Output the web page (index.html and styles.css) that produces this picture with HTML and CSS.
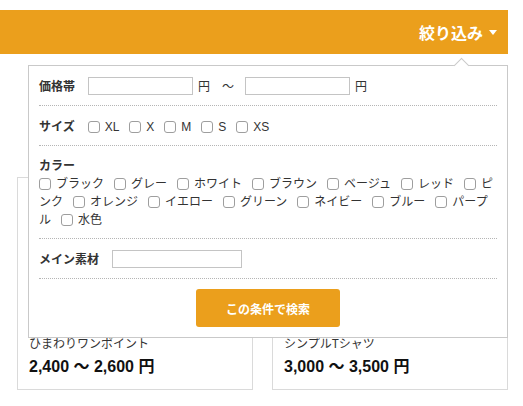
FILE: index.html
```html
<!DOCTYPE html>
<html lang="ja">
<head>
<meta charset="utf-8">
<title>絞り込み</title>
<link rel="stylesheet" href="styles.css">
</head>
<body>
<div class="page">
  <header class="bar">
    <button class="toggle" type="button">絞り込み<span class="tri"></span></button>
    <form class="panel">
      <span class="caret"></span>
      <div class="row price-row">
        <span class="lbl">価格帯</span><input class="txt price" type="text"><span class="unit">円</span><span class="wave">〜</span><input class="txt price" type="text"><span class="unit">円</span>
      </div>
      <div class="row size-row">
        <span class="lbl">サイズ</span><label class="chk"><input type="checkbox">XL</label><label class="chk"><input type="checkbox">X</label><label class="chk"><input type="checkbox">M</label><label class="chk"><input type="checkbox">S</label><label class="chk"><input type="checkbox">XS</label>
      </div>
      <div class="row color-row">
        <div class="lbl">カラー</div>
        <div class="opts"><label class="chk"><input type="checkbox">ブラック</label><label class="chk"><input type="checkbox">グレー</label><label class="chk"><input type="checkbox">ホワイト</label><label class="chk"><input type="checkbox">ブラウン</label><label class="chk"><input type="checkbox">ベージュ</label><label class="chk"><input type="checkbox">レッド</label><label class="chk"><input type="checkbox">ピンク</label><label class="chk"><input type="checkbox">オレンジ</label><label class="chk"><input type="checkbox">イエロー</label><label class="chk"><input type="checkbox">グリーン</label><label class="chk"><input type="checkbox">ネイビー</label><label class="chk"><input type="checkbox">ブルー</label><label class="chk"><input type="checkbox">パープル</label><label class="chk"><input type="checkbox">水色</label></div>
      </div>
      <div class="row mat-row">
        <span class="lbl">メイン素材</span><input class="txt mat" type="text">
      </div>
      <div class="actions">
        <button class="search" type="button">この条件で検索</button>
      </div>
    </form>
  </header>
  <main class="cards">
    <article class="card">
      <div class="thumb"></div>
      <p class="name">ひまわりワンポイント</p>
      <p class="cost">2,400 ～ 2,600 円</p>
    </article>
    <article class="card">
      <div class="thumb"></div>
      <p class="name">シンプルTシャツ</p>
      <p class="cost">3,000 ～ 3,500 円</p>
    </article>
  </main>
</div>
</body>
</html>
```

FILE: styles.css
```css
* {
  box-sizing: border-box;
}

body {
  margin: 0;
  background: #fff;
  font-family: "Liberation Sans", "Noto Sans CJK JP", sans-serif;
  font-size: 12px;
  color: #333;
}

.page {
  width: 508px;
  padding-top: 10px;
}

.bar {
  position: relative;
  height: 44px;
  background: #eb9f1c;
  display: flex;
  justify-content: flex-end;
  align-items: center;
  padding-right: 11px;
}

.toggle {
  display: flex;
  align-items: center;
  gap: 6px;
  border: 0;
  padding: 0;
  background: none;
  color: #fff;
  font-family: "Noto Sans CJK JP", sans-serif;
  font-weight: 700;
  font-size: 16px;
  line-height: 20px;
}

.tri {
  width: 0;
  height: 0;
  border-left: 4.5px solid transparent;
  border-right: 4.5px solid transparent;
  border-top: 5px solid #fff;
  margin-top: 1px;
}

.panel {
  position: absolute;
  top: 55px;
  left: 28px;
  width: 480px;
  background: #fff;
  border: 1px solid #c9c9c9;
  padding: 0 10px 10px;
  z-index: 5;
}

.caret {
  position: absolute;
  top: -6px;
  left: 427px;
  width: 11px;
  height: 11px;
  background: #fff;
  border-top: 1px solid #c9c9c9;
  border-left: 1px solid #c9c9c9;
  transform: rotate(45deg);
}

.row {
  border-bottom: 1px dotted #b5b5b5;
  line-height: 18px;
}

.lbl {
  font-family: "Noto Sans CJK JP", sans-serif;
  font-weight: 700;
  color: #333;
  margin-right: 13px;
}

.price-row {
  display: flex;
  align-items: center;
  padding: 11px 0 10px;
}

.txt {
  height: 18px;
  border: 1px solid #c4c4c4;
  border-radius: 0;
  padding: 0 4px;
  font: inherit;
  background: #fff;
}

.price {
  width: 105px;
}

.unit {
  margin-left: 5px;
  font-family: "Noto Sans CJK JP", sans-serif;
}

.wave {
  margin: 0 11px 0 12px;
  font-family: "Noto Sans CJK JP", sans-serif;
}

.size-row {
  padding: 11px 0 9px;
}

.chk {
  margin-right: 10px;
  white-space: normal;
}

.chk input {
  appearance: none;
  -webkit-appearance: none;
  width: 12px;
  height: 12px;
  margin: 0 5px 0 0;
  border: 1px solid #9e9e9e;
  border-radius: 3px;
  background: #fff;
  vertical-align: -2px;
}

.color-row {
  padding: 10px 0;
}

.color-row .lbl {
  margin-right: 0;
}

.opts {
  font-family: "Noto Sans CJK JP", sans-serif;
}

.mat-row {
  display: flex;
  align-items: center;
  padding: 11px 0 10px;
}

.mat {
  width: 130px;
}

.actions {
  display: flex;
  justify-content: center;
  padding-top: 10px;
}

.search {
  width: 144px;
  height: 38px;
  border: 0;
  border-radius: 3px;
  background: #eb9f1c;
  color: #fff;
  font-family: "Noto Sans CJK JP", sans-serif;
  font-weight: 700;
  font-size: 12px;
}

.cards {
  display: flex;
  gap: 19px;
  padding-left: 17px;
  margin-top: 123px;
}

.card {
  width: 236px;
  height: 213px;
  border: 1px solid #dadada;
  padding: 11px 11px 10px;
}

.thumb {
  height: 145px;
}

.name {
  margin: 0;
  font-family: "Noto Sans CJK JP", sans-serif;
  font-size: 12px;
  line-height: 18px;
  color: #333;
}

.cost {
  margin: 4px 0 0;
  font-weight: 700;
  font-size: 16px;
  line-height: 22px;
  color: #111;
}
```
